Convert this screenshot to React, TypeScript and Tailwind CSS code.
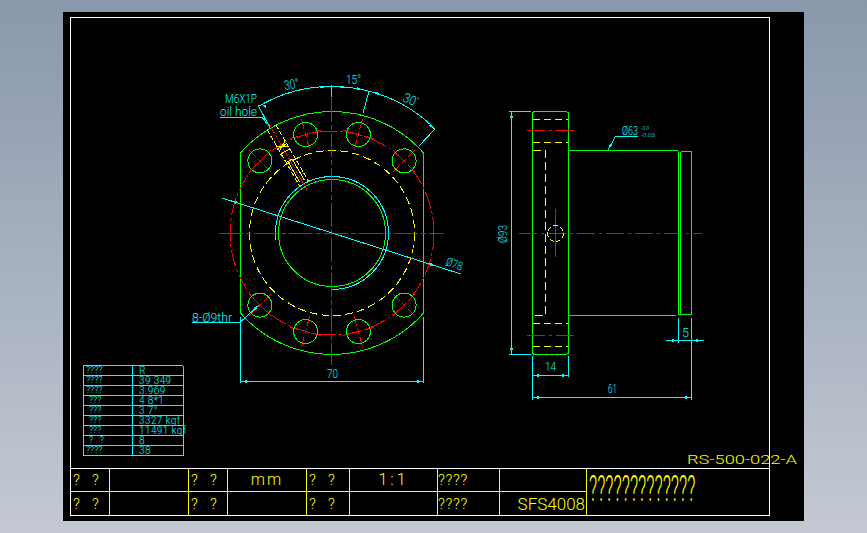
import React from "react";

const CX = 332;
const CY = 233;
const C = "#00ffff";
const G = "#00ff00";
const Y = "#ffff00";
const R = "#ff0000";
const p = (r: number, deg: number): [number, number] => {
  const a = (deg * Math.PI) / 180;
  return [CX + r * Math.sin(a), CY - r * Math.cos(a)];
};
const holeAngles = [-165, -135, -45, -15, 15, 45, 135, 165];

function L({ d, c, dash }: { d: number[]; c: string; dash?: string }) {
  return <line x1={d[0]} y1={d[1]} x2={d[2]} y2={d[3]} stroke={c} strokeDasharray={dash} />;
}

function Arrow({ x, y, a, s = 6 }: { x: number; y: number; a: number; s?: number }) {
  return <polygon points={`0,0 ${-s},-1.4 ${-s},1.4`} fill={C} transform={`translate(${x} ${y}) rotate(${a})`} />;
}

function T({ x, y, s, w, r, c = C, children }: { x: number; y: number; s: number; w?: number; r?: number; c?: string; children: React.ReactNode }) {
  return (
    <text
      x={x}
      y={y}
      fontSize={s}
      fill={c}
      stroke="none"
      textLength={w}
      lengthAdjust={w ? "spacingAndGlyphs" : undefined}
      transform={r ? `rotate(${r} ${x} ${y})` : undefined}
    >
      {children}
    </text>
  );
}

function Drawing() {
  const a = p(146.5, -30);
  const b = p(146.5, 45);
  return (
    <svg
      viewBox="71 18 698 450"
      width={698}
      height={450}
      fill="none"
      shapeRendering="crispEdges"
      className="absolute left-0 top-0 overflow-visible"
    >
      {/* front view */}
      <path
        d="M240.5 153 L246 147 A122 122 0 0 1 418 147 L423.5 153 L423.5 313 L418 319 A122 122 0 0 1 246 319 L240.5 313 Z"
        stroke={G}
      />
      <circle cx={CX} cy={CY} r={53.5} stroke={G} />
      <path d={`M275.5 240 L275.5 233 A56.5 56.5 0 1 1 332 289.5`} stroke={C} />
      <circle cx={CX} cy={CY} r={82.5} stroke={Y} strokeDasharray="8 4" />
      <circle cx={CX} cy={CY} r={102} stroke={R} strokeDasharray="17 3 3 3" />
      <L d={[219, 233.5, 444, 233.5]} c={R} dash="24 3 5 3" />
      <L d={[331.5, 98, 331.5, 365]} c={R} dash="24 3 5 3" />
      {holeAngles.map((ang) => {
        const [x, y] = p(102, ang);
        const [x1, y1] = p(86, ang);
        const [x2, y2] = p(118, ang);
        const t = ((ang + 90) * Math.PI) / 180;
        const dx = 16 * Math.sin(t);
        const dy = -16 * Math.cos(t);
        return (
          <g key={ang}>
            <L d={[x1, y1, x2, y2]} c={R} dash="10 3 6 3 10" />
            <L d={[x - dx, y - dy, x + dx, y + dy]} c={R} dash="10 3 6 3 10" />
            <circle cx={x} cy={y} r={12} stroke={G} />
          </g>
        );
      })}
      {/* oil hole */}
      <g transform={`translate(${CX} ${CY}) rotate(-30)`}>
        <L d={[-4.5, -122, -4.5, -57]} c={Y} dash="5 2" />
        <L d={[5.5, -122, 5.5, -57]} c={Y} dash="5 2" />
        <L d={[0, -127, 0, -50]} c={R} dash="12 2 4 2" />
        <path d="M-2.5 -60 L-2.5 -84 L2.5 -84 L2.5 -60" stroke={Y} />
        <path d="M-6 -100 L6 -100 M-5 -103 L5 -97 M-5 -97 L5 -103 M-6 -94 L6 -94" stroke={Y} />
      </g>
      {/* angular dimensions */}
      <path d={`M${a[0]} ${a[1]} A146.5 146.5 0 0 1 ${b[0]} ${b[1]}`} stroke={C} />
      <L d={[258, 105, 270, 128]} c={C} />
      <L d={[331.5, 85, 331.5, 97]} c={C} />
      <L d={[369, 91, 363, 113]} c={C} />
      <L d={[435, 129, 419, 146]} c={C} />
      <Arrow x={261} y={104} a={-150} />
      <Arrow x={326} y={87} a={0} />
      <Arrow x={338} y={87} a={180} />
      <Arrow x={363} y={90} a={15} />
      <Arrow x={372} y={92} a={195} />
      <Arrow x={434} y={129} a={45} />
      <T x={285} y={90} s={13} w={15} r={-10}>30°</T>
      <T x={346} y={84} s={13} w={15}>15°</T>
      <T x={402} y={101} s={13} w={15} r={22}>30'</T>
      <T x={225} y={103} s={12} w={32}>M6X1P</T>
      <T x={220} y={116} s={12} w={37}>oil hole</T>
      <path d="M220 117.5 L262 117.5 L270 126" stroke={C} />
      <Arrow x={270} y={126} a={45} />
      {/* diameter 78 */}
      <L d={[222, 198, 461, 274]} c={C} />
      <Arrow x={231} y={201} a={197.6} />
      <Arrow x={436} y={266} a={17.6} />
      <T x={445} y={265} s={12} w={17} r={20}>Ø78</T>
      {/* holes note */}
      <T x={192} y={322} s={12} w={40}>8-Ø9thr</T>
      <path d="M192 322.5 L240 322.5 L259 305" stroke={C} />
      <Arrow x={259} y={305} a={-42} />
      {/* width 70 */}
      <L d={[240.5, 317, 240.5, 383]} c={C} />
      <L d={[423.5, 317, 423.5, 383]} c={C} />
      <L d={[240.5, 381.5, 423.5, 381.5]} c={C} />
      <Arrow x={241} y={381.5} a={180} />
      <Arrow x={423} y={381.5} a={0} />
      <T x={327} y={378} s={13} w={11}>70</T>

      {/* side view */}
      <path
        d="M534 111.5 L566.5 111.5 L568.5 113 L568.5 353 L566.5 354.5 L534 354.5 L532.5 353 L532.5 113 Z"
        stroke={G}
      />
      <path d="M568.5 150.5 L677.5 150.5 L678.5 152 L678.5 315 L568.5 315.5" stroke={G} />
      <path d="M680.5 151.5 L691.5 151.5 L691.5 314.5 L678.5 314.5 M680.5 151.5 L680.5 314.5" stroke={G} />
      {[119.5, 142.5, 323.5, 346.5].map((y) => (
        <L key={y} d={[533, y, 568, y]} c={Y} dash="7 4" />
      ))}
      <path d="M533 150.5 L545.5 150.5 L545.5 315.5 L533 315.5" stroke={Y} strokeDasharray="8 4" />
      <L d={[527, 130.5, 574, 130.5]} c={R} dash="18 4 3 4" />
      <L d={[527, 335.5, 574, 335.5]} c={R} dash="18 4 3 4" />
      <L d={[519, 233.5, 702, 233.5]} c={R} dash="18 4 3 4" />
      <L d={[555.5, 209, 555.5, 257]} c={R} />
      <circle cx={555.5} cy={233.5} r={8} stroke={Y} strokeDasharray="5 2" />
      {/* phi 93 */}
      <L d={[511.5, 111.5, 511.5, 354.5]} c={C} />
      <L d={[509, 111.5, 531, 111.5]} c={C} />
      <L d={[509, 354.5, 531, 354.5]} c={C} />
      <Arrow x={511.5} y={112} a={-90} />
      <Arrow x={511.5} y={354} a={90} />
      <T x={507} y={243} s={12} w={18} r={-90}>Ø93</T>
      {/* phi 63 */}
      <path d="M608 150 L615.5 136.5 L638 136.5" stroke={C} />
      <Arrow x={608} y={150} a={119} />
      <T x={622} y={135} s={12} w={16}>Ø63</T>
      <T x={641} y={129.5} s={5.5} w={8}>-0.0</T>
      <T x={641} y={136.5} s={5.5} w={14}>-0.03</T>
      {/* 5 */}
      <L d={[678.5, 318, 678.5, 343]} c={C} />
      <L d={[691.5, 318, 691.5, 400]} c={C} />
      <L d={[666, 340.5, 704, 340.5]} c={C} />
      <Arrow x={678} y={340.5} a={0} />
      <Arrow x={692} y={340.5} a={180} />
      <T x={682} y={337} s={13} w={7}>5</T>
      {/* 14 */}
      <L d={[532.5, 356, 532.5, 400]} c={C} />
      <L d={[568.5, 356, 568.5, 377]} c={C} />
      <L d={[532.5, 375.5, 568.5, 375.5]} c={C} />
      <Arrow x={533} y={375.5} a={180} />
      <Arrow x={568} y={375.5} a={0} />
      <T x={545} y={371} s={13} w={11}>14</T>
      {/* 61 */}
      <L d={[532.5, 397.5, 691.5, 397.5]} c={C} />
      <Arrow x={533} y={397.5} a={180} />
      <Arrow x={691} y={397.5} a={0} />
      <T x={608} y={393} s={13} w={9}>61</T>

      <T x={687} y={464} s={13} w={110} c={Y}>RS-500-022-A</T>
    </svg>
  );
}

const specRows: [string, string, string][] = [
  ["????", "R", "pl-[2px]"],
  ["????", "39 349", "pl-[2px]"],
  ["????", "3.969", "pl-[2px]"],
  ["???", "4 8*1", "pl-[5px]"],
  ["???", "3 7°", "pl-[5px]"],
  ["???", "3327 kgf", "pl-[5px]"],
  ["???", "11491 kgf", "pl-[5px]"],
  ["?   ?", "8", "pl-[5px]"],
  ["????", "38", "pl-[2px]"],
];

function Pair() {
  return (
    <div className="flex pl-[2px] text-[15px] leading-none">
      <span className="w-[19px]">?</span>
      <span>?</span>
    </div>
  );
}

const cell = "flex items-center border-r border-[#ffff00] min-w-0";

function TitleBlock() {
  return (
    <div className="grid h-[47px] grid-cols-[39px_79px_39px_79px_43px_88px_62px_87px_182px] grid-rows-[23px_24px] border-t border-white text-[#ffff00]">
      <div className={`${cell} border-b`}><Pair /></div>
      <div className={`${cell} border-b`} />
      <div className={`${cell} border-b`}><Pair /></div>
      <div className={`${cell} border-b justify-center text-[16px] tracking-[2px]`}>mm</div>
      <div className={`${cell} border-b`}><Pair /></div>
      <div className={`${cell} border-b justify-center text-[16px] tracking-[3px]`}>1:1</div>
      <div className={`${cell} border-b text-[15px] tracking-[0.7px]`}>????</div>
      <div className={`${cell} border-b`} />
      <div className="row-span-2 relative">
        <span className="absolute left-[2px] top-[2px] origin-top-left scale-x-[0.5] whitespace-nowrap text-[36px] leading-[36px]">
          ?????????????
        </span>
      </div>
      <div className={cell}><Pair /></div>
      <div className={cell} />
      <div className={cell}><Pair /></div>
      <div className={cell} />
      <div className={cell}><Pair /></div>
      <div className={cell} />
      <div className={`${cell} text-[15px] tracking-[0.7px]`}>????</div>
      <div className={`${cell} justify-end pr-[1px] text-[17px] leading-none`}>SFS4008</div>
    </div>
  );
}

export default function App() {
  return (
    <div className="h-[533px] w-full overflow-hidden bg-gradient-to-b from-[#8a98ac] to-[#c4c9d3] pl-[63px] pt-[12px] font-['Roboto',Arial,sans-serif] font-light">
      <div className="h-[509px] w-[741px] bg-black pl-[7px] pt-[5px]">
        <div className="flex h-[499px] w-[700px] flex-col border border-white">
          <div className="relative flex flex-1 items-end pb-[12px] pl-[12px]">
            <Drawing />
            <div className="grid w-[100px] grid-cols-[49px_51px] border-l border-t border-[#00ffff] text-[#00ffff]">
              {specRows.map(([k, v, pad], i) => (
                <React.Fragment key={i}>
                  <div className={`h-[10px] whitespace-pre border-b border-r border-[#00ffff] text-[9px] leading-[9px] ${pad}`}>{k}</div>
                  <div className="h-[10px] whitespace-nowrap border-b border-r border-[#00ffff] pl-[6px] text-[10px] leading-[9px] tracking-[0.4px]">{v}</div>
                </React.Fragment>
              ))}
            </div>
          </div>
          <TitleBlock />
        </div>
      </div>
    </div>
  );
}
